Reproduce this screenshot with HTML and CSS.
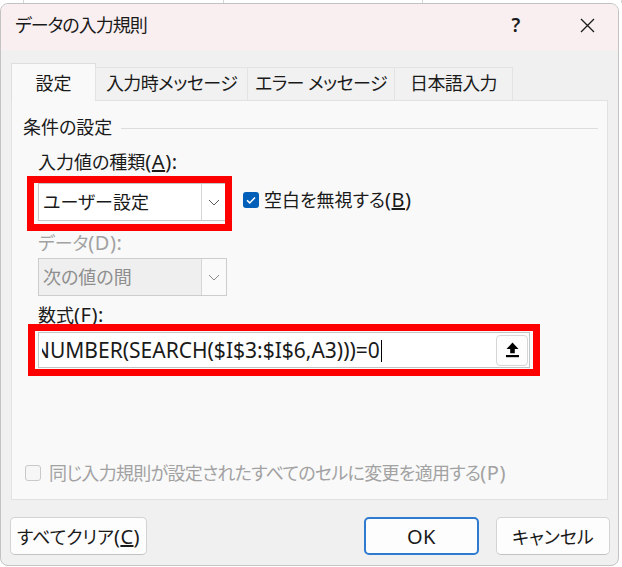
FILE: index.html
```html
<!DOCTYPE html>
<html lang="ja">
<head>
<meta charset="utf-8">
<title>データの入力規則</title>
<link rel="stylesheet" href="styles.css">
</head>
<body>
<div class="backdrop"><span></span><span></span><span></span><span></span></div>
<div class="window">
  <div class="titlebar">
    <div class="title">データの入力規則</div>
    <div class="tb-btn help">?</div>
    <div class="tb-btn close">
      <svg width="15" height="15" viewBox="0 0 15 15"><path d="M1 1L14 14M14 1L1 14" stroke="#1a1a1a" stroke-width="1.3" fill="none"/></svg>
    </div>
  </div>
  <div class="body">
    <div class="tabs">
      <div class="tab active">設定</div>
      <div class="tab t-input">入力時メッセージ</div>
      <div class="tab t-error">エラー メッセージ</div>
      <div class="tab t-ime">日本語入力</div>
    </div>
    <div class="panel">
      <div class="group-head"><span>条件の設定</span><div class="rule"></div></div>
      <div class="content">
        <div class="label first">入力値の種類<span class="lt">(<u>A</u>):</span></div>
        <div class="row">
          <div class="combo anno anno-combo">
            <div class="val">ユーザー設定</div>
            <div class="drop"><svg width="12" height="7" viewBox="0 0 12 7"><path d="M1 1l5 5 5-5" fill="none" stroke="#5f5f5f" stroke-width="1"/></svg></div>
          </div>
          <div class="check">
            <span class="box checked"><svg width="16" height="16" viewBox="0 0 16 16"><path d="M4 8.2l2.7 2.7L12 5.4" fill="none" stroke="#fff" stroke-width="1.5"/></svg></span>
            <span>空白を無視する<span class="lt">(<u>B</u>)</span></span>
          </div>
        </div>
        <div class="label disabled">データ<span class="lt">(D):</span></div>
        <div class="combo disabled-combo">
          <div class="val">次の値の間</div>
          <div class="drop"><svg width="12" height="7" viewBox="0 0 12 7"><path d="M1 1l5 5 5-5" fill="none" stroke="#8a8a8a" stroke-width="1"/></svg></div>
        </div>
        <div class="label formula-label">数式<span class="lt">(F):</span></div>
        <div class="input anno anno-input">
          <div class="formula">NUMBER(SEARCH($I$3:$I$6,A3)))=0<span class="caret"></span></div>
          <div class="collapse-btn"><svg width="15" height="18" viewBox="0 0 15 18"><path d="M7.5 1.5L1.5 8H5.2V12.2H9.8V8H13.5Z" fill="#000"/><rect x="1" y="14" width="13" height="2.2" fill="#000"/></svg></div>
        </div>
      </div>
      <div class="check apply disabled">
        <span class="box off"></span>
        <span class="apply-text">同じ入力規則が設定されたすべてのセルに変更を適用する<span class="lt">(P)</span></span>
      </div>
    </div>
    <div class="footer">
      <div class="btn clear">すべてクリア<span class="lt">(<u>C</u>)</span></div>
      <div class="btn ok"><span class="lt">OK</span></div>
      <div class="btn cancel">キャンセル</div>
    </div>
  </div>
</div>
</body>
</html>
```

FILE: styles.css
```css
* { box-sizing: border-box; }
html, body { margin: 0; padding: 0; }
body {
  width: 622px;
  height: 567px;
  overflow: hidden;
  background: #ffffff;
  font-family: "Noto Sans", "Noto Sans CJK JP", sans-serif;
  font-size: 18px;
  color: #1a1a1a;
  font-feature-settings: "palt";
}
.backdrop { height: 3px; display: flex; }
.backdrop span { width: 214px; border-right: 1px solid #d6d6d6; }
.backdrop span:first-child { width: 26px; }

.window {
  width: 619px;
  height: 563px;
  border: 1px solid #c3c3c3;
  border-radius: 8px;
  background: #f0f0f0;
  display: flex;
  flex-direction: column;
  overflow: hidden;
}
.titlebar {
  height: 46px;
  flex: none;
  background: #f9eff0;
  display: flex;
  align-items: flex-start;
  padding: 9px 8px 0 14px;
  line-height: 24px;
}
.title { flex: 1; letter-spacing: -1px; }
.tb-btn {
  width: 46px;
  height: 24px;
  display: flex;
  align-items: center;
  justify-content: center;
}
.help { font-size: 19px; font-weight: 600; }
.close { margin-left: 25px; }

.body { flex: 1; display: flex; flex-direction: column; }

.tabs {
  display: flex;
  align-items: flex-end;
  height: 37px;
  margin: 13px 10px 0;
  position: relative;
  z-index: 1;
}
.tab {
  height: 33px;
  padding-top: 3px;
  border: 1px solid #e3e3e3;
  border-bottom: none;
  background: #f1f1f1;
  line-height: 24px;
  margin-left: -1px;
  white-space: nowrap;
  text-align: center;
  letter-spacing: -0.6px;
}
.tab.active {
  width: 85px;
  height: 38px;
  margin-bottom: -1px;
  margin-left: 0;
  padding-top: 7px;
  background: #f9f9f9;
  border-color: #dedede;
  letter-spacing: 0;
}
.t-input { width: 153px; }
.t-error { width: 148px; }
.t-ime { width: 119px; }

.panel {
  flex: 1;
  margin: 0 10px;
  background: #f9f9f9;
  border: 1px solid #e2e2e2;
  display: flex;
  flex-direction: column;
  padding: 14px 9px 15px 11px;
}
.group-head {
  display: flex;
  align-items: center;
  line-height: 24px;
}
.rule { flex: 1; height: 1px; background: #dcdcdc; margin-left: 9px; margin-top: 2px; }
.content { padding-left: 15px; display: flex; flex-direction: column; align-items: flex-start; }

.lt { font-size: 20px; letter-spacing: 0.5px; }
.label { line-height: 22px; margin-top: 11px; white-space: nowrap; }
.label.first { margin-top: 12px; }
.label.disabled { color: #a2a2a2; }
.label.formula-label { margin-top: 8px; }

.row { display: flex; align-items: flex-start; margin-top: 10px; }

.combo {
  width: 189px;
  height: 38px;
  border: 1px solid #c6c6c6;
  background: #ffffff;
  display: flex;
}
.combo .val { flex: 1; padding-left: 4px; line-height: 36px; white-space: nowrap; }
.combo .drop {
  width: 25px;
  border-left: 1px solid #d6d6d6;
  display: flex;
  align-items: center;
  justify-content: center;
}
.disabled-combo { margin-top: 4px; background: #efefef; border-color: #cdcdcd; }
.disabled-combo .val { color: #8e8e8e; }
.disabled-combo .drop { background: #fafafa; }

.anno { position: relative; }
.anno::after {
  content: "";
  position: absolute;
  border: 7px solid #ff0000;
  pointer-events: none;
}
.anno-combo::after { left: -12px; right: -6px; top: -8px; bottom: -11px; }
.anno-input::after { left: -11px; right: -11px; top: -9px; bottom: -9px; }

.check {
  display: flex;
  align-items: center;
  gap: 5px;
  line-height: 22px;
  white-space: nowrap;
}
.row .check { margin-left: 16px; margin-top: 6px; }
.box {
  width: 16px;
  height: 16px;
  border-radius: 3px;
  display: flex;
}
.box.checked { background: #005fb8; }
.box.off { border: 1px solid #c9c9c9; background: #f6f6f6; }
.check.apply { margin-top: auto; margin-left: 2px; gap: 8px; color: #a2a2a2; }
.apply-text { letter-spacing: -0.7px; }

.input {
  width: 492px;
  height: 36px;
  margin-top: 6px;
  border: 1px solid #c4c4c4;
  background: #ffffff;
  display: flex;
  align-items: center;
}
.formula {
  flex: 1;
  overflow: hidden;
  white-space: nowrap;
  font-family: "Noto Sans", sans-serif;
  font-size: 21px;
  margin-left: 3px;
  text-indent: -8px;
  line-height: 30px;
  font-feature-settings: normal;
}
.caret {
  display: inline-block;
  width: 1px;
  height: 22px;
  background: #000;
  vertical-align: -4px;
  margin-left: 1px;
}
.collapse-btn {
  width: 32px;
  height: 31px;
  margin-right: 1px;
  border: 1px solid #d6d6d6;
  border-radius: 4px;
  background: #fdfdfd;
  display: flex;
  align-items: center;
  justify-content: center;
}

.footer {
  flex: none;
  display: flex;
  padding: 17px 8px 10px 9px;
}
.btn {
  height: 38px;
  border: 1px solid #d3d3d3;
  border-bottom-color: #c2c2c2;
  border-radius: 5px;
  background: #fdfdfd;
  display: flex;
  align-items: center;
  justify-content: center;
  white-space: nowrap;
}
.btn.clear { width: 137px; }
.btn.ok { width: 115px; margin-left: auto; border: 2px solid #2f7bd0; }
.btn.cancel { width: 114px; margin-left: 17px; }
```
